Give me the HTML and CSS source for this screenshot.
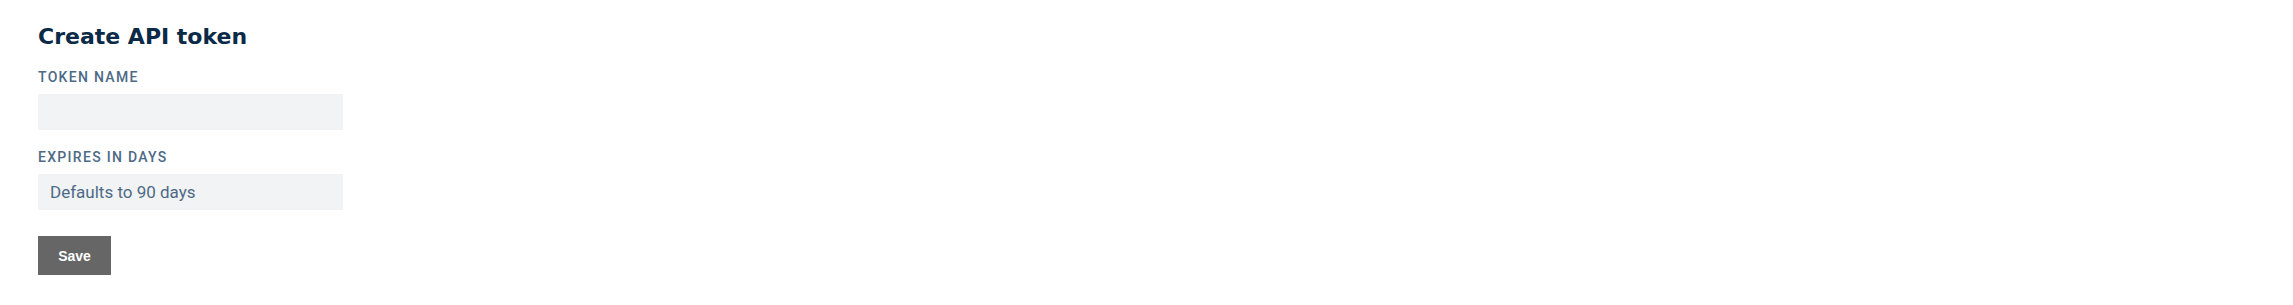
FILE: index.html
```html
<!DOCTYPE html>
<html>
<head>
<meta charset="utf-8">
<link rel="stylesheet" href="styles.css">
</head>
<body>
<main class="page">
  <h1 class="title">Create API token</h1>
  <form class="form">
    <div class="field">
      <label class="label" for="name">TOKEN NAME</label>
      <input class="input" id="name" type="text">
    </div>
    <div class="field">
      <label class="label" for="days">EXPIRES IN DAYS</label>
      <input class="input" id="days" type="text" placeholder="Defaults to 90 days">
    </div>
    <button class="btn" type="button">Save</button>
  </form>
</main>
</body>
</html>
```
FILE: styles.css
```css
html, body { margin: 0; padding: 0; background: #fff; }
.page { padding: 23px 38px; }
.title {
  margin: 0;
  font-family: "DejaVu Sans", sans-serif;
  font-weight: 700;
  font-size: 22px;
  line-height: 28px;
  color: #0b2a47;
  letter-spacing: 0;
}
.form { display: flex; flex-direction: column; align-items: flex-start; margin-top: 19px; }
.field { display: flex; flex-direction: column; margin-bottom: 20px; }
.label {
  font-family: "Roboto", sans-serif;
  font-weight: 500;
  font-size: 14px;
  line-height: 15px;
  letter-spacing: 1.3px;
  color: #4d6a85;
  margin-bottom: 9px;
}
.input {
  box-sizing: border-box;
  width: 305px;
  height: 36px;
  border: 0;
  background: #f2f3f5;
  padding: 0 12px;
  font-family: "Roboto", sans-serif;
  font-size: 17px;
  color: #0b2a47;
  outline: none;
}
.input::placeholder { color: #4d6a85; opacity: 1; }
.btn {
  margin-top: 6px;
  width: 73px;
  height: 39px;
  border: 0;
  background: #666;
  color: #fff;
  font-family: "Liberation Sans", Arial, sans-serif;
  font-weight: 700;
  font-size: 14px;
  padding: 0;
}
```
